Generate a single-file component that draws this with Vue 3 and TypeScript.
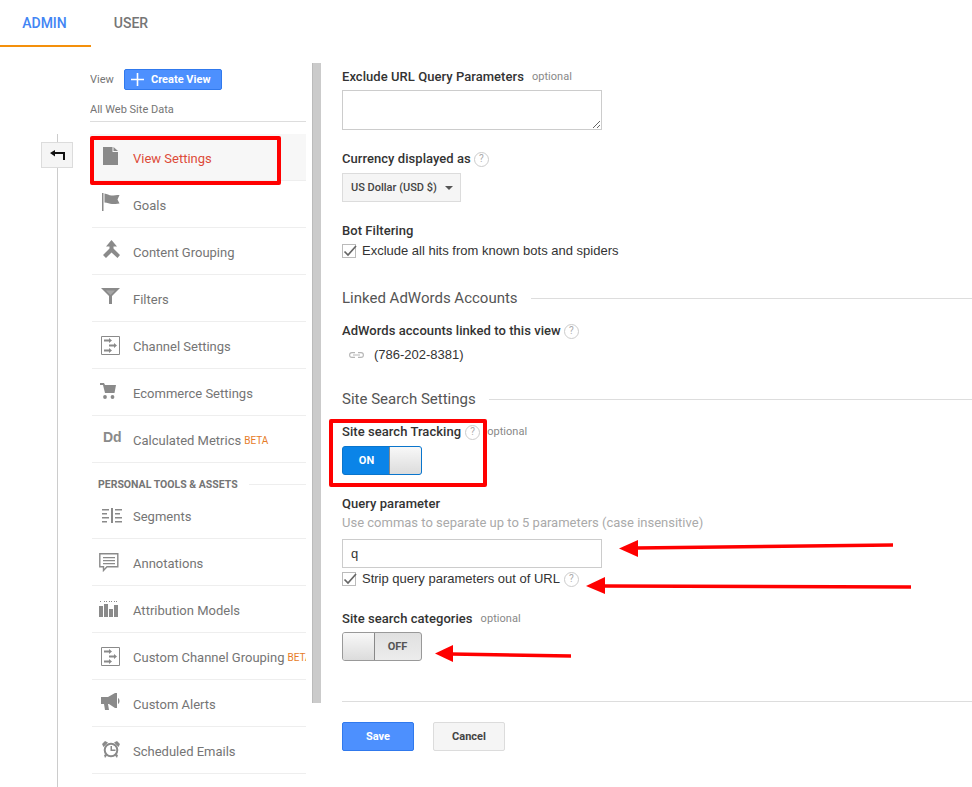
<script setup lang="ts">
interface NavItem { label: string; icon: string; badge?: string; active?: boolean }
const adminItems: NavItem[] = [
  { label: 'View Settings', icon: 'doc', active: true },
  { label: 'Goals', icon: 'flag' },
  { label: 'Content Grouping', icon: 'merge' },
  { label: 'Filters', icon: 'filter' },
  { label: 'Channel Settings', icon: 'channel' },
  { label: 'Ecommerce Settings', icon: 'cart' },
  { label: 'Calculated Metrics', icon: 'dd', badge: 'BETA' },
]
const personalItems: NavItem[] = [
  { label: 'Segments', icon: 'segments' },
  { label: 'Annotations', icon: 'note' },
  { label: 'Attribution Models', icon: 'bars' },
  { label: 'Custom Channel Grouping', icon: 'channel', badge: 'BETA' },
  { label: 'Custom Alerts', icon: 'horn' },
  { label: 'Scheduled Emails', icon: 'clock' },
]
</script>

<template>
  <div class="page">
    <header class="tabs">
      <div class="tab tab-on">ADMIN</div>
      <div class="tab">USER</div>
    </header>

    <div class="body">
      <div class="rail">
        <div class="rail-line"></div>
        <button class="back" aria-label="Back">
          <svg width="15" height="10" viewBox="0 0 15 10"><path d="M5 0 0 3 5 6.500V4h8v6h2V2H5z" fill="#111"/></svg>
        </button>
      </div>

      <nav class="nav">
        <div class="view-row">
          <span class="view-word">View</span>
          <button class="create">
            <svg width="13" height="13" viewBox="0 0 13 13"><path d="M5.700 0h1.600v5.700H13v1.600H7.300V13H5.700V7.300H0V5.700h5.700z" fill="#fff"/></svg>
            <span>Create View</span>
          </button>
        </div>
        <div class="view-name">All Web Site Data</div>

        <template v-for="group in [adminItems, personalItems]" :key="group[0].label">
          <div v-if="group === personalItems" class="group-head">
            <span>PERSONAL TOOLS &amp; ASSETS</span><i></i>
          </div>
          <div
            v-for="item in group"
            :key="item.label"
            class="item"
            :class="{ active: item.active, first: item.label === 'Segments' }"
          >
            <span class="ico" :class="'i-' + item.icon">
              <svg v-if="item.icon === 'doc'" width="15" height="18" viewBox="0 0 15 18"><path d="M0 0h9.500v5H15v13H0zM10.500 0 15 4h-4.500z" fill="#8a8a8a"/></svg>
              <svg v-else-if="item.icon === 'flag'" width="18" height="18" viewBox="0 0 18 18"><path d="M0 0h1.500v18H0zM2.500 .5c2.500.3 4.500 2 7 2 2.500 0 5-.5 8-.5l-2 4.500 2 4c-3 .5-5 .5-7.500.5-2.500 0-4.500-1.500-7.500-1.500z" fill="#8a8a8a"/></svg>
              <svg v-else-if="item.icon === 'merge'" width="17" height="18" viewBox="0 0 17 18"><path d="M8.500 0 14 6.500H10.500V8.500L17 15l-2.500 3L8.500 12.500 3 18 0 15 6.500 8.500V6.500H3z" fill="#8a8a8a"/></svg>
              <svg v-else-if="item.icon === 'filter'" width="19" height="16" viewBox="0 0 19 16"><path d="M0 0h19L11 8v8H8V8z" fill="#8a8a8a"/><path d="M5 2.500h9L9.500 7z" fill="#a5a5a5"/></svg>
              <svg v-else-if="item.icon === 'channel'" width="19" height="19" viewBox="0 0 19 19"><path d="M.5.5h18v18H.5z" fill="none" stroke="#8a8a8a"/><path d="M3 3.500h5V2l3 2.500L8 7V5.500H3zM8 8.500h5V7l3 2.500L13 12v-1.500H8zM3 13.500h5V12l3 2.500L8 17v-1.500H3z" fill="#8a8a8a"/></svg>
              <svg v-else-if="item.icon === 'cart'" width="16" height="16" viewBox="0 0 16 16"><path d="M0 0h4l1 2h11l-1.500 8H5L3 2H0z" fill="#8a8a8a"/><circle cx="5" cy="14" r="1.900" fill="#8a8a8a"/><circle cx="12.500" cy="14" r="1.900" fill="#8a8a8a"/></svg>
              <span v-else-if="item.icon === 'dd'" class="dd">Dd</span>
              <svg v-else-if="item.icon === 'segments'" width="20" height="15" viewBox="0 0 20 15"><path d="M9 0h2v15H9zM0 1h7v1.500H0zM13 1h7v1.500h-7zM0 5h5v1.500H0zM13 5h5v1.500h-5zM0 9h7v1.500H0zM13 9h7v1.500h-7zM0 13h5v1.500H0zM13 13h7v1.500h-7z" fill="#8a8a8a"/></svg>
              <svg v-else-if="item.icon === 'note'" width="20" height="19" viewBox="0 0 20 19"><path d="M.8.8h18v13H8L4.500 17.500V13.800H.8z" fill="none" stroke="#8a8a8a" stroke-width="1.400"/><path d="M4 4h12v1.200H4zM4 7h12v1.200H4zM4 10h12v1.200H4z" fill="#8a8a8a"/></svg>
              <svg v-else-if="item.icon === 'bars'" width="19" height="16" viewBox="0 0 19 16"><path d="M0 5h4v11H0zM5 3h4v13H5zM10 8h4v8h-4zM15 4h4v12h-4z" fill="#8a8a8a"/><path d="M1 .5h1M5 .5h1M7 .5h1M10 .5h1M12 .5h1M15 .5h1M17 .5h1" stroke="#8a8a8a"/></svg>
              <svg v-else-if="item.icon === 'horn'" width="19" height="17" viewBox="0 0 19 17"><path d="M0 4h7l7-4h2v15h-2L8 11H7l1 6H4l-1-6H0z" fill="#8a8a8a"/><path d="M17 5c2 1 2 5 0 6z" fill="#8a8a8a"/></svg>
              <svg v-else-if="item.icon === 'clock'" width="18" height="17" viewBox="0 0 18 17"><circle cx="9" cy="9" r="6.300" fill="none" stroke="#8a8a8a" stroke-width="2"/><path d="M8.500 5H10v3.500h3.500V10h-5zM0 3l3-3 3 1.500L1.500 6zM18 3l-3-3-3 1.500L16.500 6zM2 14l2-1 1 1.500-2 2.500zM16 14l-2-1-1 1.500 2 2.500z" fill="#8a8a8a"/></svg>
            </span>
            <span class="label">{{ item.label }}</span>
            <span v-if="item.badge" class="badge">{{ item.badge }}</span>
          </div>
        </template>
      </nav>

      <div class="scroll"><div class="thumb"></div></div>

      <main class="main">
        <div class="lbl first-lbl">Exclude URL Query Parameters <em>optional</em></div>
        <textarea class="ta" aria-label="Exclude URL Query Parameters"></textarea>

        <div class="lbl cur">Currency displayed as <span class="q">?</span></div>
        <button class="select">US Dollar (USD $) <i></i></button>

        <div class="lbl bot">Bot Filtering</div>
        <label class="check">
          <span class="box"><svg width="14" height="12" viewBox="0 0 14 12"><path d="M1.500 6.500 5 10 13 1" fill="none" stroke="#666" stroke-width="1.700"/></svg></span>
          Exclude all hits from known bots and spiders
        </label>

        <div class="sect linked"><span>Linked AdWords Accounts</span><i></i></div>
        <div class="lbl aw">AdWords accounts linked to this view <span class="q">?</span></div>
        <div class="acct">
          <svg width="15" height="6" viewBox="0 0 15 6"><path d="M6 .6H3a2.400 2.400 0 0 0 0 4.800h3M9 .6h3a2.400 2.400 0 0 1 0 4.800H9M4 3h7" fill="none" stroke="#b5b5b5" stroke-width="1.100"/></svg>
          <span>(786-202-8381)</span>
        </div>

        <div class="sect search"><span>Site Search Settings</span><i></i></div>
        <div class="lbl tr">Site search Tracking <span class="q">?</span> <em class="tight">optional</em></div>
        <div class="toggle on"><b>ON</b><span class="knob"></span></div>

        <div class="lbl qp">Query parameter</div>
        <div class="hint">Use commas to separate up to 5 parameters (case insensitive)</div>
        <input class="inp" value="q" aria-label="Query parameter" />
        <label class="check strip">
          <span class="box"><svg width="14" height="12" viewBox="0 0 14 12"><path d="M1.500 6.500 5 10 13 1" fill="none" stroke="#666" stroke-width="1.700"/></svg></span>
          Strip query parameters out of URL <span class="q">?</span>
        </label>

        <div class="lbl cat">Site search categories <em>optional</em></div>
        <div class="toggle off"><span class="knob"></span><b>OFF</b></div>

        <hr class="rule" />
        <div class="actions">
          <button class="save">Save</button>
          <button class="cancel">Cancel</button>
        </div>
      </main>
    </div>

    <div class="mark mark-a"></div>
    <div class="mark mark-b"></div>
    <svg class="arrows" width="972" height="787" viewBox="0 0 972 787">
      <g fill="#f00" stroke="#f00">
        <path d="M893 545 636 548" stroke-width="3.500" />
        <path d="M619 548.500 638 540V557z" stroke-width="0" />
        <path d="M911 587 603 586" stroke-width="3.500" />
        <path d="M586 586 605 577V594z" stroke-width="0" />
        <path d="M571 656 451 654" stroke-width="3.500" />
        <path d="M435 653.500 453 645V662z" stroke-width="0" />
      </g>
    </svg>
  </div>
</template>

<style>
html, body { margin: 0; background: #fff; }
</style>

<style scoped>
.page { position: relative; width: 972px; height: 787px; overflow: hidden; background: #fff; font-family: Roboto, "Liberation Sans", sans-serif; color: #333; }
.tabs { display: flex; height: 47px; }
.tab { width: 80px; box-sizing: border-box; padding-top: 15px; text-align: center; font-size: 14px; font-weight: 500; color: #757575; line-height: 17px; }
.tab-on { width: 91px; padding-right: 2px; color: #4285f4; border-bottom: 2px solid #f4900c; height: 47px; }
.body { display: flex; height: 740px; }
.rail { position: relative; width: 90px; flex: none; }
.rail-line { position: absolute; left: 57px; top: 87px; bottom: 0; width: 1px; background: #ccc; }
.back { position: absolute; left: 41px; top: 95px; width: 32px; height: 26px; padding: 0; background: #f5f5f5; border: 1px solid #dcdcdc; display: flex; align-items: center; justify-content: center; }
.nav { width: 216px; flex: none; overflow: hidden; }
.view-row { display: flex; align-items: center; height: 22px; margin-top: 21px; }
.view-word { font-size: 11px; color: #757575; width: 34px; }
.create { display: flex; align-items: center; gap: 7px; width: 98px; height: 21px; padding: 0 0 0 6px; background: #4d90fe; border: 1px solid #3079ed; border-radius: 2px; color: #fff; font: 700 11px Roboto, sans-serif; white-space: nowrap; }
.view-name { font-size: 11px; color: #757575; line-height: 16px; padding: 12px 0 3px; border-bottom: 1px solid #ddd; }
.item { display: flex; align-items: center; height: 47px; box-sizing: border-box; padding-top: 2px; border-bottom: 1px solid #eee; margin-left: 2px; font-size: 13px; color: #757575; white-space: nowrap; }
.item.active { margin-top: 12px; margin-left: 0; padding-left: 2px; background: #f7f7f7; color: #dd4b39; }
.item.first { margin-top: -1px; }
.ico { width: 41px; flex: none; display: flex; padding-left: 10px; box-sizing: border-box; }
.i-doc { transform: translate(1px, -2px); }
.i-flag { transform: translateY(-3px); }
.i-merge { transform: translate(1px, -3px); }
.i-filter { transform: translate(-1px, -3px); }
.i-channel { transform: translate(-1px, -1px); }
.i-cart { transform: translate(-2px, -2px); }
.i-dd { transform: translate(1px, -3px); }
.i-segments { transform: translateY(-1px); }
.i-note { transform: translate(-3px, -1px); }
.i-bars { transform: translate(-3px, -1px); }
.i-horn { transform: translate(-1px, -3px); }
.i-clock { transform: translateY(-2px); }
.dd { font-size: 14px; font-weight: 700; color: #8a8a8a; font-family: "Liberation Sans", sans-serif; line-height: 14px; }
.badge { color: #e67c28; font-size: 10px; margin-left: 3px; }
.group-head { display: flex; align-items: center; gap: 11px; height: 30px; margin-left: 8px; font-size: 10.500px; font-weight: 700; color: #757575; padding-top: 13px; box-sizing: border-box; white-space: nowrap; }
.group-head i { flex: 1; height: 1px; background: #eee; }
.scroll { width: 9px; flex: none; margin: 16px 0 0 6px; }
.thumb { height: 640px; background: #cbcbcb; border-left: 1px solid #bbb; box-sizing: border-box; }
.main { flex: 1; min-width: 0; margin-left: 21px; display: flex; flex-direction: column; align-items: flex-start; font-size: 13px; }
.lbl { font-weight: 500; font-size: 13px; letter-spacing: .05px; line-height: 16px; color: #333; white-space: nowrap; display: flex; align-items: center; gap: 4px; }
.lbl em { font-style: normal; font-weight: 400; font-size: 11px; color: #888; margin-left: 4px; }
.lbl em.tight { margin-left: 3px; }
.first-lbl { margin-top: 22px; }
.ta { width: 260px; height: 40px; box-sizing: border-box; border: 1px solid #ccc; margin-top: 5px; display: block; border-radius: 0; outline: 0; }
.cur { margin-top: 21px; gap: 3px; }
.q { width: 13px; height: 13px; border: 1px solid #ccc; border-radius: 50%; font-size: 10px; color: #aaa; display: inline-flex; align-items: center; justify-content: center; font-weight: 400; letter-spacing: 0; }
.select { margin-top: 6px; width: 119px; height: 29px; padding: 0 0 0 8px; text-align: left; background: #f5f5f5; border: 1px solid #dcdcdc; color: #444; font: 500 11px Roboto, sans-serif; display: flex; align-items: center; gap: 8px; white-space: nowrap; }
.select i { border: 4px solid transparent; border-top-color: #555; border-bottom: 0; }
.bot { margin-top: 21px; }
.check { display: flex; align-items: center; font-family: "Liberation Sans", sans-serif; font-size: 13px; color: #333; line-height: 16px; white-space: nowrap; margin-top: 4px; }
.box { width: 12px; height: 12px; border: 1px solid #bbb; margin-right: 6px; position: relative; background: #fff; display: block; flex: none; }
.box svg { position: absolute; left: 0; top: 0; }
.check .q { margin-left: 4px; font-family: Roboto, sans-serif; }
.sect { align-self: stretch; display: flex; align-items: center; font-size: 15px; color: #555; line-height: 18px; white-space: nowrap; gap: 13px; }
.sect i { flex: 1; height: 1px; background: #ddd; }
.linked { margin-top: 30px; }
.aw { margin-top: 16px; gap: 3px; }
.acct { display: flex; align-items: center; gap: 10px; margin: 8px 0 0 7px; font-family: "Liberation Sans", sans-serif; font-size: 13px; line-height: 16px; color: #333; }
.search { margin-top: 27px; }
.tr { margin-top: 16px; }
.toggle { display: flex; width: 80px; height: 29px; box-sizing: border-box; border-radius: 3px; overflow: hidden; border: 1px solid #999; font-size: 11px; }
.toggle b { flex: 1; display: flex; align-items: center; justify-content: center; font-weight: 700; }
.knob { width: 31px; flex: none; background: linear-gradient(#f8f8f8, #dcdcdc); }
.on { margin-top: 6px; background: #0a84e8; border-color: #0a75cc; color: #fff; }
.on b { padding-left: 1px; }
.on .knob { border-left: 1px solid #888; }
.off { margin-top: 5px; background: linear-gradient(#e0e0e0, #ececec); color: #555; }
.off b { padding-right: 1px; }
.off .knob { border-right: 1px solid #888; }
.qp { margin-top: 21px; }
.hint { font-size: 13px; line-height: 16px; color: #aaa; margin-top: 3px; white-space: nowrap; }
.inp { width: 260px; height: 29px; box-sizing: border-box; border: 1px solid #ccc; margin-top: 8px; padding: 0 8px; font: 13px "Liberation Sans", sans-serif; color: #333; outline: 0; }
.strip { margin-top: 3px; }
.cat { margin-top: 24px; }
.rule { align-self: stretch; border: 0; height: 1px; background: #ddd; margin: 40px 0 0; }
.actions { display: flex; gap: 19px; margin-top: 20px; }
.actions button { width: 72px; height: 29px; font: 700 11px Roboto, sans-serif; border-radius: 2px; padding: 0; }
.save { background: #4d90fe; border: 1px solid #3079ed; color: #fff; }
.cancel { background: #f5f5f5; border: 1px solid #dcdcdc; color: #444; }
.mark { position: absolute; border: 4px solid #f00; border-radius: 2px; box-sizing: border-box; pointer-events: none; }
.mark-a { left: 90px; top: 136px; width: 191px; height: 49px; }
.mark-b { left: 329px; top: 419px; width: 158px; height: 68px; }
.arrows { position: absolute; left: 0; top: 0; pointer-events: none; }
</style>
